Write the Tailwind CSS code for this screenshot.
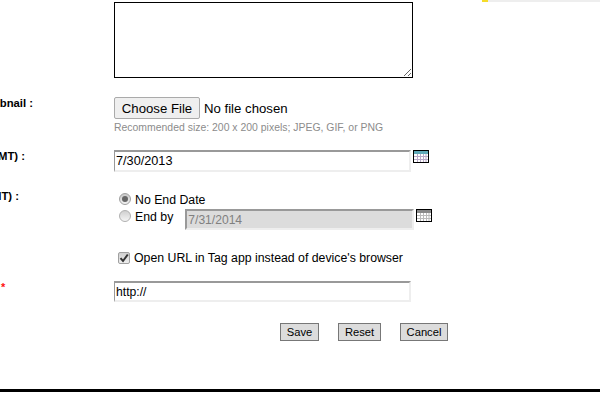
<!DOCTYPE html>
<html lang="en">
<head>
    <meta charset="UTF-8">
    <title>Edit Tag</title>
    <script src="https://cdn.jsdelivr.net/npm/@tailwindcss/browser@4"></script>
</head>
<body class="bg-white text-black font-['Liberation_Sans',Arial,sans-serif] overflow-hidden h-[400px] relative">

    <!-- notification strip, top right -->
    <div class="absolute top-0 left-[482px] right-0 h-[2px] flex">
        <div class="w-[6px] bg-[#f5dc2a]"></div>
        <div class="flex-1 bg-[#eeeeee]"></div>
    </div>

    <form class="flex flex-col pt-[2px] h-[389px]">
        <!-- description -->
        <div class="flex">
            <div class="w-[114px]"></div>
            <textarea class="w-[299px] h-[76px] border border-black block bg-white resize outline-none"></textarea>
        </div>

        <!-- thumbnail -->
        <div class="flex mt-[19px]">
            <div class="w-[114px] shrink-0">
                <div class="w-[33px] flex justify-end whitespace-nowrap text-[11.3px] leading-[12px] font-bold">Thumbnail&nbsp;:</div>
            </div>
            <div>
                <div class="flex items-center text-[13.2px] h-[22px]">
                    <button type="button" class="w-[86px] h-[22px] pt-[1px] bg-[#efefef] border border-[#aaaaaa] rounded-[2px] text-[13.2px] leading-none">Choose File</button>
                    <span class="ml-[4px] mt-[1px]">No file chosen</span>
                </div>
                <p class="text-[10.45px] leading-[13px] text-[#8c8c8c] mt-[2px]">Recommended size: 200 x 200 pixels; JPEG, GIF, or PNG</p>
            </div>
        </div>

        <!-- start date -->
        <div class="flex mt-[16px]">
            <div class="w-[114px] shrink-0">
                <div class="w-[25px] flex justify-end whitespace-nowrap text-[11.3px] leading-[12px] font-bold">Start Date (GMT)&nbsp;:</div>
            </div>
            <input type="text" value="7/30/2013" class="w-[297px] h-[22px] bg-white border-2 border-[#eeeeee] border-t-[#999999] border-l-[#999999] border-l-[1px] pl-[1px] text-[12.7px] outline-none">
            <svg class="ml-[2px]" width="16" height="13" viewBox="0 0 16 13">
                <rect width="16" height="13" fill="#000"/>
                <rect x="1" y="1" width="14" height="3" fill="#5fa8b8"/>
                <rect x="1" y="4" width="14" height="8" fill="#fff"/>
                <path d="M1 6.5h14M1 9.5h14M4.5 4v8M7.5 4v8M10.5 4v8M13 4v8" stroke="#b9a9c9" stroke-width="1" fill="none"/>
            </svg>
        </div>

        <!-- end date -->
        <div class="flex mt-[18px]">
            <div class="w-[114px] shrink-0">
                <div class="w-[19px] flex justify-end whitespace-nowrap text-[11.3px] leading-[12px] font-bold">End Date (GMT)&nbsp;:</div>
            </div>
            <div class="flex flex-col pl-[5px]">
                <div class="flex items-center h-[15px] mt-[1px]">
                    <span class="w-[12px] h-[12px] rounded-full border border-[#a0a0a0] bg-linear-to-b from-[#c8c8c8] to-[#f2f2f2] flex items-center justify-center">
                        <span class="w-[6px] h-[6px] rounded-full bg-[#666666]"></span>
                    </span>
                    <span class="ml-[4px] text-[12.3px] leading-[15px] mt-[4px]">No End Date</span>
                </div>
                <div class="flex mt-[3px]">
                    <span class="w-[12px] h-[12px] rounded-full border border-[#b0b0b0] bg-linear-to-b from-[#d0d0d0] to-[#f5f5f5] mt-[1px]"></span>
                    <span class="ml-[4px] text-[12.3px] leading-[15px] mt-[1px]">End by</span>
                    <input type="text" value="7/31/2014" disabled class="ml-[12px] w-[229px] h-[21px] bg-[#dcdcdc] text-[#808080] border-2 border-[#eeeeee] border-t-[#999999] border-l-[#999999] pl-[1px] pt-[1px] text-[12.1px] outline-none">
                    <svg class="ml-[2px]" width="16" height="13" viewBox="0 0 16 13">
                        <rect width="16" height="13" fill="#000"/>
                        <rect x="1" y="1" width="14" height="3" fill="#8a8a8a"/>
                        <rect x="1" y="4" width="14" height="8" fill="#fff"/>
                        <path d="M1 6.5h14M1 9.5h14M4.5 4v8M7.5 4v8M10.5 4v8M13 4v8" stroke="#bbbbbb" stroke-width="1" fill="none"/>
                    </svg>
                </div>
            </div>
        </div>

        <!-- open in app -->
        <div class="flex items-center mt-[19px] pl-[118px]">
            <span class="w-[12px] h-[12px] rounded-[2px] border border-[#a0a0a0] bg-linear-to-b from-[#d0d0d0] to-[#eeeeee] flex items-center justify-center">
                <svg width="10" height="10" viewBox="0 0 10 10"><path d="M1.5 5.2 4 8 8.8 1.5" stroke="#333" stroke-width="2" fill="none"/></svg>
            </span>
            <span class="ml-[4px] mt-[2px] text-[12.3px] leading-[15px]">Open URL in Tag app instead of device's browser</span>
        </div>

        <!-- url -->
        <div class="flex mt-[15px]">
            <div class="w-[114px] shrink-0 pl-[1px] pt-[1px] text-[#ff1111] text-[11px] leading-[11px] font-bold">*</div>
            <input type="text" value="http://" class="w-[297px] h-[21px] bg-white border-2 border-[#eeeeee] border-t-[#999999] border-l-[#999999] border-l-[1px] pl-[1px] pt-[1px] text-[12.2px] outline-none">
        </div>

        <!-- buttons -->
        <div class="flex mt-[21px] pl-[280px] text-[11.2px]">
            <button type="button" class="w-[39px] h-[18px] pt-[1px] bg-[#dcdcdc] border border-[#777777] leading-none">Save</button>
            <button type="button" class="ml-[19px] w-[43px] h-[18px] pt-[1px] bg-[#dcdcdc] border border-[#777777] leading-none">Reset</button>
            <button type="button" class="ml-[19px] w-[48px] h-[18px] pt-[1px] bg-[#dcdcdc] border border-[#777777] leading-none">Cancel</button>
        </div>
    </form>

    <div class="h-[3px] bg-black"></div>
</body>
</html>
